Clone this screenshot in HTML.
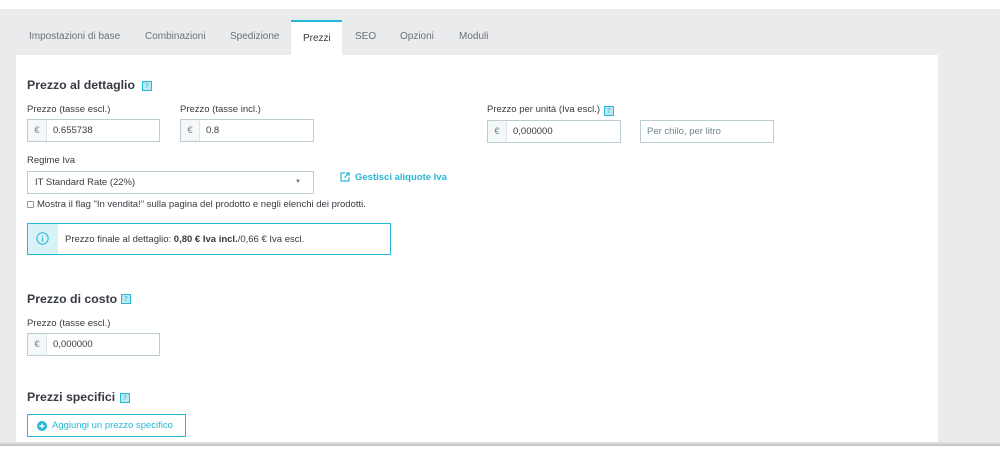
<!DOCTYPE html>
<html><head><meta charset="utf-8"><style>
*{box-sizing:border-box;margin:0;padding:0}
body{width:1000px;height:456px;background:#fff;font-family:"Liberation Sans",sans-serif;color:#363a41;position:relative;overflow:hidden;font-size:10px}
.a{position:absolute}
.bg{left:0;top:9px;width:1000px;height:436px;background:#eaebed}
.panel{left:16px;top:55px;width:922px;height:390px;background:#fff}
.line{left:0;top:442px;width:1000px;height:4px;background:linear-gradient(#e6e6e8,#bcbcc0)}
.tab{top:31px;font-size:10px;color:#6c7177}
.act{left:291px;top:20px;width:51px;height:35px;background:#fff;border-top:2px solid #25b9d7}
h2{position:absolute;font-size:12.3px;font-weight:bold;color:#363a41}
.q{position:absolute;width:10px;height:10px;border:1px solid #25b9d7;background:#bde8f2;font-size:7px;color:#25b9d7;text-align:center;line-height:8px;font-family:"DejaVu Sans",sans-serif}
.lbl{font-size:9.5px;color:#363a41}
.inp{position:absolute;height:23px;border:1px solid #bbcdd2;background:#fff;font-size:9.5px;line-height:21px}
.inp .e{position:absolute;left:0;top:0;width:19px;height:21px;background:#f5f8f9;border-right:1px solid #dbe6e9;color:#6c868e;text-align:center}
.inp .v{position:absolute;left:25px}
</style></head><body>
<div class="a bg"></div>
<div class="a act"></div>
<div class="a panel"></div>
<div class="a line"></div>
<div class="a tab" style="left:29px">Impostazioni di base</div>
<div class="a tab" style="left:145px">Combinazioni</div>
<div class="a tab" style="left:230px">Spedizione</div>
<div class="a tab" style="left:303px;top:33px;color:#363a41">Prezzi</div>
<div class="a tab" style="left:355px">SEO</div>
<div class="a tab" style="left:400px">Opzioni</div>
<div class="a tab" style="left:459px">Moduli</div>

<h2 style="left:27px;top:78px">Prezzo al dettaglio</h2><div class="q" style="left:142px;top:81px">?</div>
<div class="a lbl" style="left:27px;top:104px">Prezzo (tasse escl.)</div>
<div class="inp" style="left:27px;top:119px;width:133px"><span class="e">€</span><span class="v">0.655738</span></div>
<div class="a lbl" style="left:180px;top:104px">Prezzo (tasse incl.)</div>
<div class="inp" style="left:180px;top:119px;width:134px"><span class="e">€</span><span class="v">0.8</span></div>
<div class="a lbl" style="left:487px;top:104px">Prezzo per unità (Iva escl.)</div><div class="q" style="left:604px;top:106px">?</div>
<div class="inp" style="left:487px;top:120px;width:134px"><span class="e">€</span><span class="v">0,000000</span></div>
<div class="inp" style="left:640px;top:120px;width:134px;color:#6c868e;padding-left:6px">Per chilo, per litro</div>

<div class="a lbl" style="left:27px;top:155px">Regime Iva</div>
<div class="inp" style="left:27px;top:171px;width:287px;padding-left:7px">IT Standard Rate (22%)<span style="position:absolute;right:12px;top:0;font-size:6px;color:#6c7177">▼</span></div>
<svg class="a" style="left:340px;top:172px" width="10" height="10" viewBox="0 0 10 10"><path d="M5 1H1v8h8V5M6 1h3v3M9 1L4.5 5.5" fill="none" stroke="#25b9d7" stroke-width="1.2"/></svg>
<div class="a" style="left:355px;top:172px;font-size:9.5px;font-weight:bold;color:#25b9d7">Gestisci aliquote Iva</div>

<div class="a" style="left:27px;top:201px;width:7px;height:7px;border:1px solid #999;border-radius:1px"></div>
<div class="a lbl" style="left:37px;top:199px">Mostra il flag "In vendita!" sulla pagina del prodotto e negli elenchi dei prodotti.</div>

<div class="a" style="left:27px;top:223px;width:364px;height:32px;border:1px solid #25b9d7;background:#fff"></div>
<div class="a" style="left:28px;top:224px;width:30px;height:30px;background:#d9f2f8"></div>
<svg class="a" style="left:36px;top:232px" width="13" height="13" viewBox="0 0 13 13"><circle cx="6.5" cy="6.5" r="5.7" fill="none" stroke="#25b9d7" stroke-width="1"/><path d="M6.5 5.5v4M6.5 3.5v1" stroke="#25b9d7" stroke-width="1.2"/></svg>
<div class="a lbl" style="left:65px;top:234px">Prezzo finale al dettaglio: <b>0,80 € Iva incl.</b>/0,66 € Iva escl.</div>

<h2 style="left:27px;top:292px">Prezzo di costo</h2><div class="q" style="left:121px;top:294px">?</div>
<div class="a lbl" style="left:27px;top:318px">Prezzo (tasse escl.)</div>
<div class="inp" style="left:27px;top:333px;width:133px"><span class="e">€</span><span class="v">0,000000</span></div>

<h2 style="left:27px;top:390px">Prezzi specifici</h2><div class="q" style="left:120px;top:393px">?</div>
<div class="a" style="left:27px;top:414px;width:159px;height:23px;border:1px solid #25b9d7;color:#25b9d7;font-size:9.5px;line-height:21px;padding-left:24px">Aggiungi un prezzo specifico</div>
<svg class="a" style="left:37px;top:421px" width="10" height="10" viewBox="0 0 10 10"><circle cx="5" cy="5" r="5" fill="#25b9d7"/><path d="M5 2.5v5M2.5 5h5" stroke="#fff" stroke-width="1.4"/></svg>
</body></html>
